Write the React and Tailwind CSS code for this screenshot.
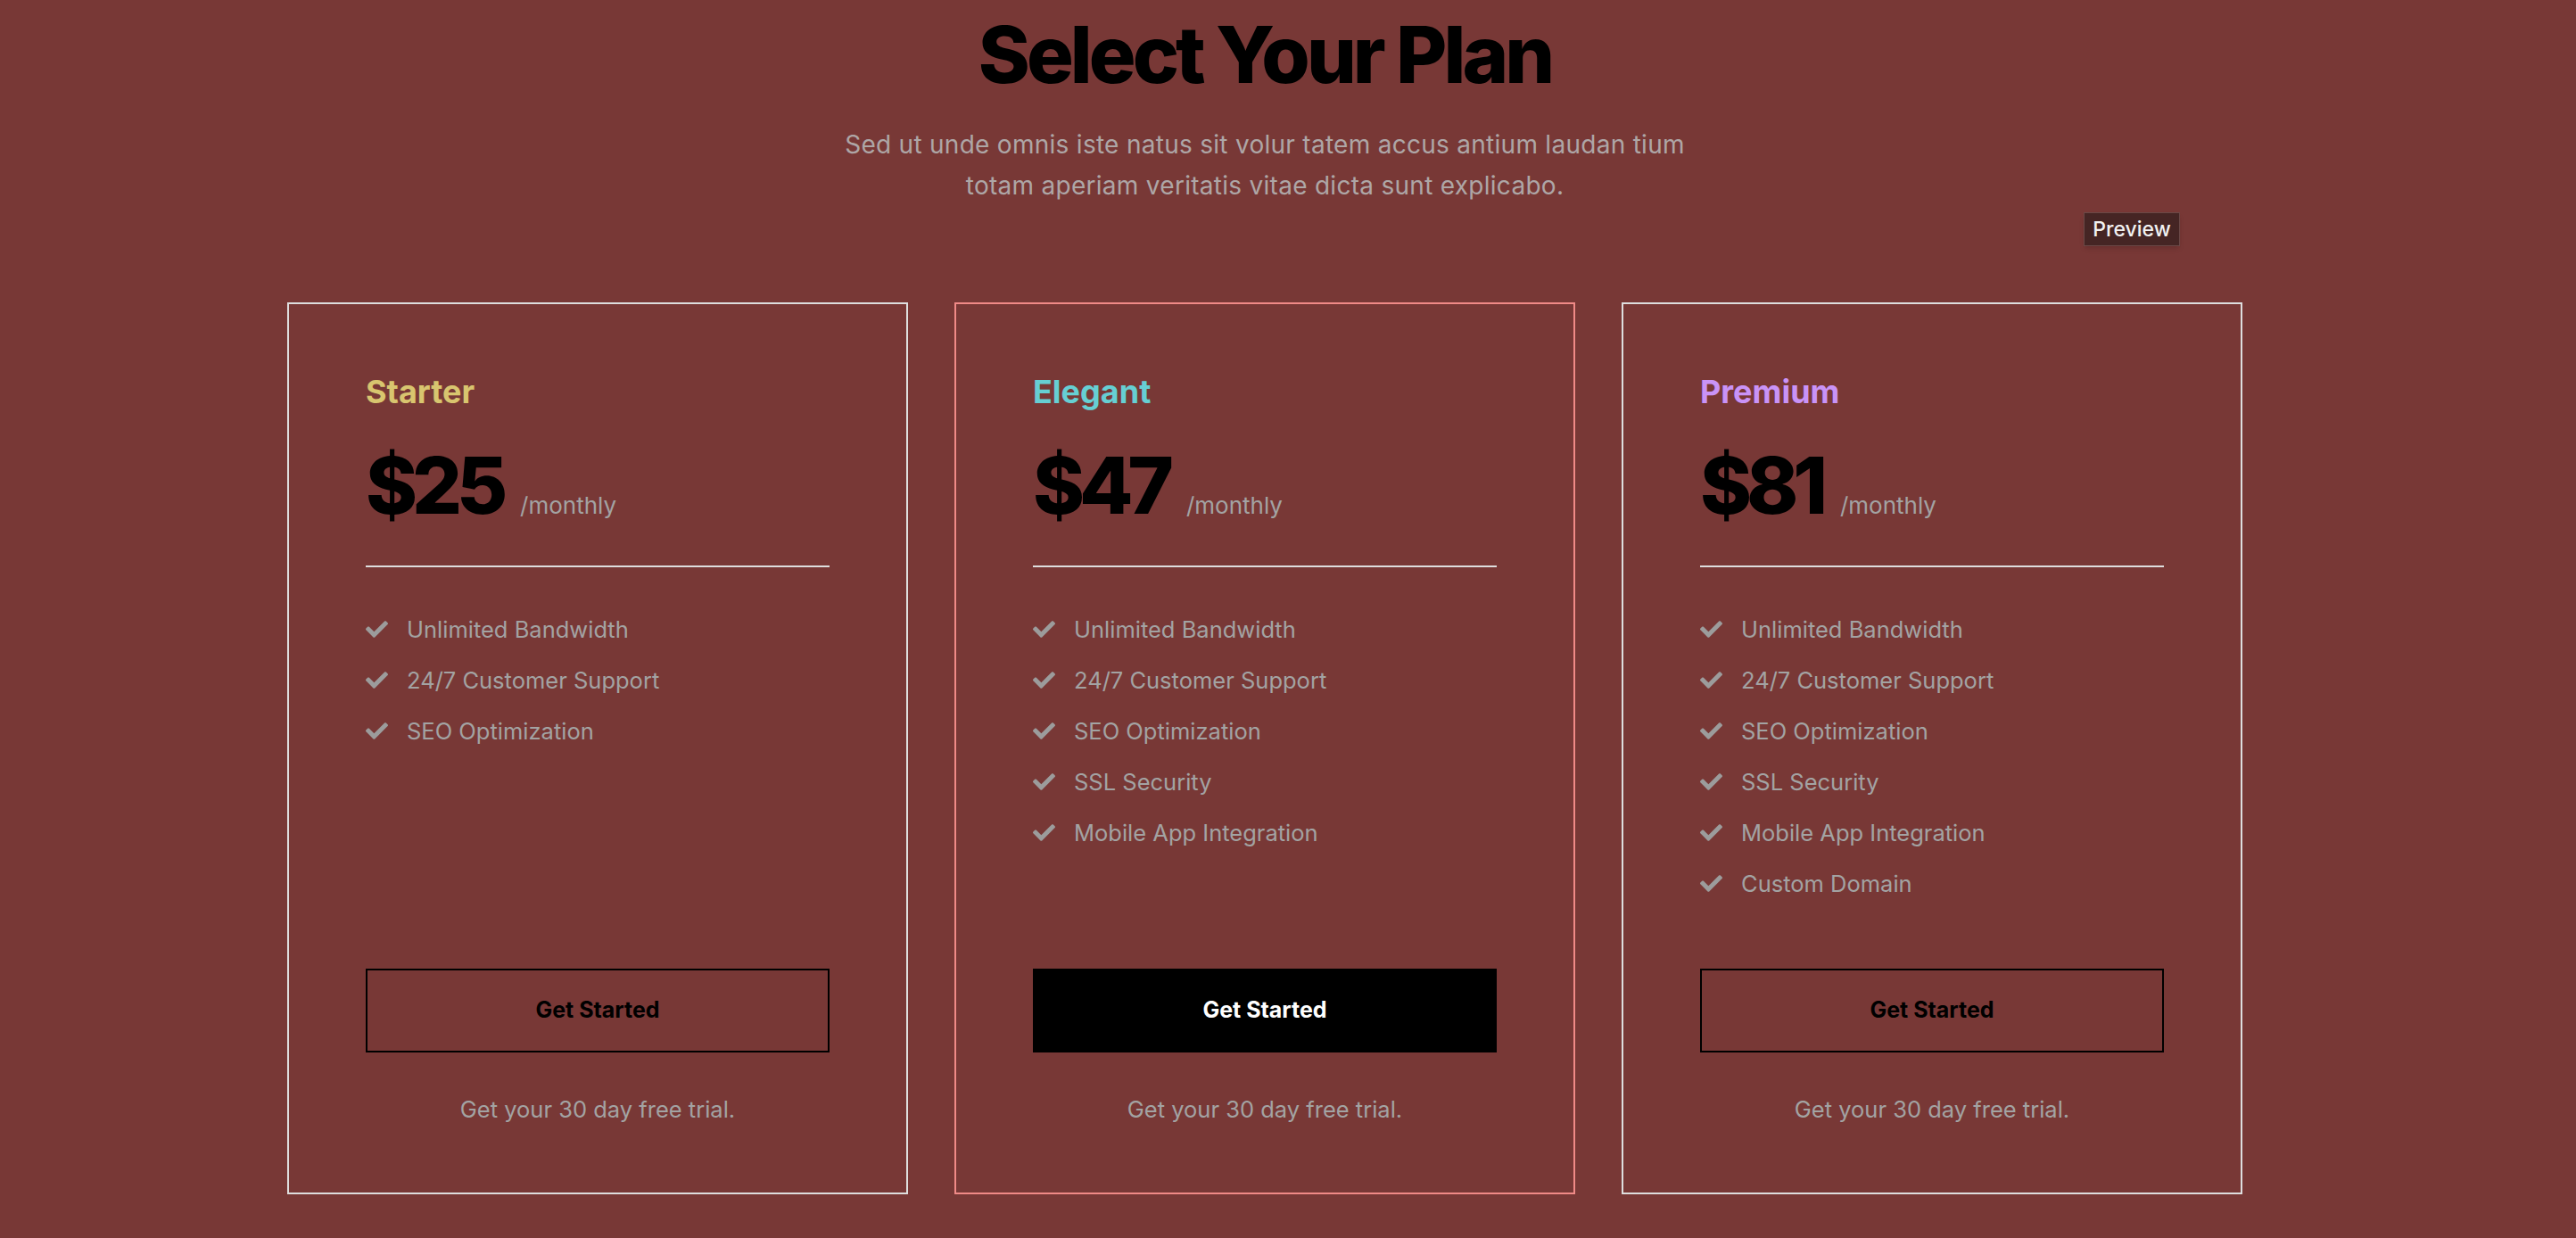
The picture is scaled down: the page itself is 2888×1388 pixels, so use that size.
import React from "react";
import { FaCheck } from "react-icons/fa";

const plans = [
  {
    name: "Starter",
    price: "$25",
    nameColor: "text-[#d8c56f]",
    border: "border-[#dedede]",
    featured: false,
    features: ["Unlimited Bandwidth", "24/7 Customer Support", "SEO Optimization"],
  },
  {
    name: "Elegant",
    price: "$47",
    nameColor: "text-[#66cfd3]",
    border: "border-[#f08a87]",
    featured: true,
    features: [
      "Unlimited Bandwidth",
      "24/7 Customer Support",
      "SEO Optimization",
      "SSL Security",
      "Mobile App Integration",
    ],
  },
  {
    name: "Premium",
    price: "$81",
    nameColor: "text-[#c993f7]",
    border: "border-[#dedede]",
    featured: false,
    features: [
      "Unlimited Bandwidth",
      "24/7 Customer Support",
      "SEO Optimization",
      "SSL Security",
      "Mobile App Integration",
      "Custom Domain",
    ],
  },
];

function PlanCard({ plan }) {
  return (
    <div
      className={`h-[1000px] border-2 ${plan.border} px-[86px] pt-[76px] pb-[73px] flex flex-col`}
    >
      <div className={`text-[36px] leading-[44px] font-bold ${plan.nameColor}`}>
        {plan.name}
      </div>

      <div className="mt-[38px] flex items-baseline">
        <span className="text-[88px] leading-[90px] font-extrabold tracking-[-0.07em] text-black">
          {plan.price}
        </span>
        <span className="ml-[20px] text-[26px] text-[#a3a3a3]">/monthly</span>
      </div>

      <div className="mt-[45px] h-[2px] bg-[#dedede]" />

      <ul className="mt-[41px]">
        {plan.features.map((f) => (
          <li key={f} className="flex items-center gap-[21px] h-[57px] text-[25.5px] leading-[57px] text-[#a3a3a3]">
            <FaCheck className="w-[25px] h-[25px] text-[#9c9c9c] shrink-0" />
            <span>{f}</span>
          </li>
        ))}
      </ul>

      <button
        className={
          plan.featured
            ? "mt-auto h-[94px] w-full bg-black text-white text-[25px] font-bold"
            : "mt-auto h-[94px] w-full border-2 border-black text-black text-[25px] font-bold"
        }
      >
        Get Started
      </button>

      <div className="mt-[44px] text-center text-[25.5px] leading-[40px] text-[#a3a3a3]">
        Get your 30 day free trial.
      </div>
    </div>
  );
}

function App() {
  return (
    <div className="min-h-screen bg-[#783836] font-['Inter','Liberation_Sans',sans-serif]">
      <div className="relative w-[2836px] flex flex-col items-center pt-[17px] pb-[60px]">
        <h1 className="text-[88px] leading-[88px] font-extrabold tracking-[-0.045em] text-black">
          Select Your Plan
        </h1>
        <p className="mt-[34px] text-center text-[28px] leading-[46px] tracking-[0.01em] text-[#aea6a6]">
          Sed ut unde omnis iste natus sit volur tatem accus antium laudan tium
          <br />
          totam aperiam veritatis vitae dicta sunt explicabo.
        </p>

        <div className="absolute left-[2336px] top-[238px] w-[108px] h-[38px] flex items-center justify-center bg-[#452524] border border-[#6a4846] text-[#f2f2f2] text-[23px] font-medium shadow-md">
          Preview
        </div>

        <div className="mt-[108px] grid grid-cols-3 gap-[52px] w-[2192px]">
          {plans.map((plan) => (
            <PlanCard key={plan.name} plan={plan} />
          ))}
        </div>
      </div>
    </div>
  );
}

export default App;
